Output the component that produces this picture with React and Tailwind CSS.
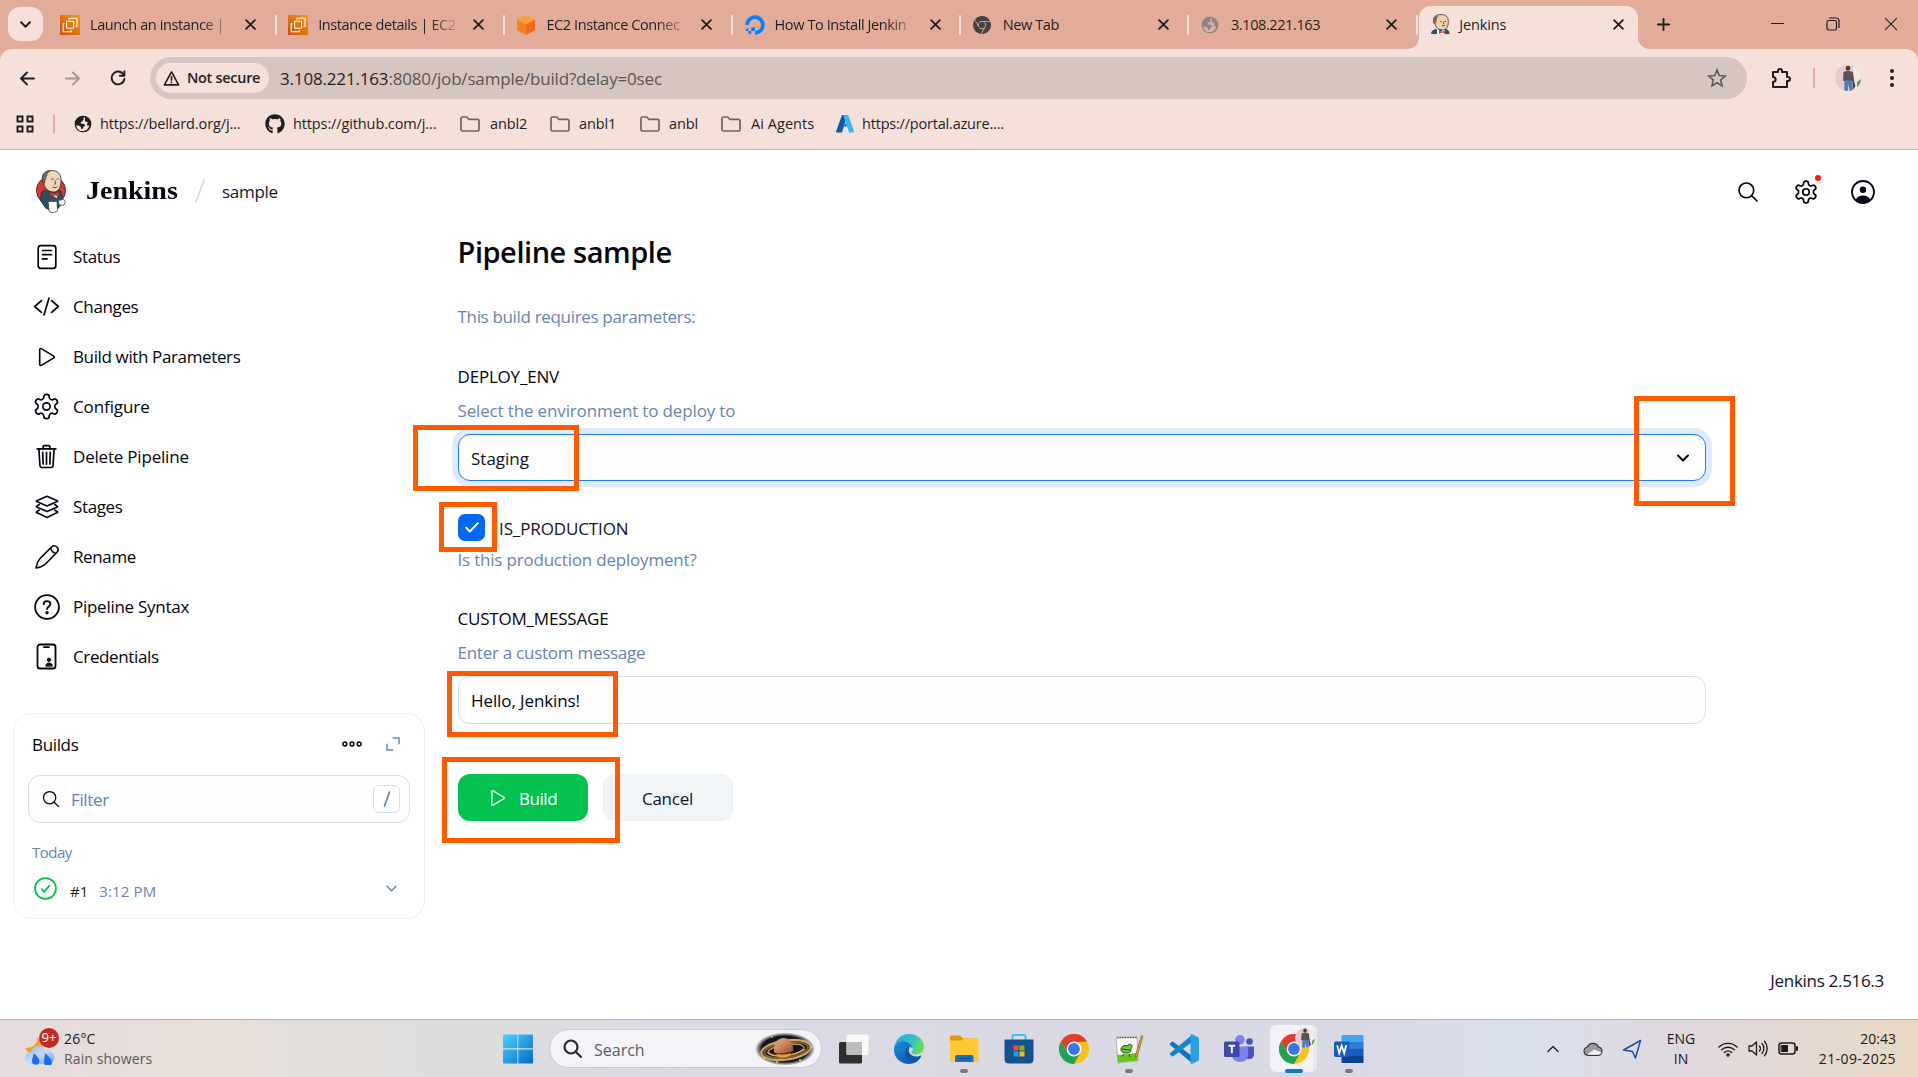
import React from "react";
import { FaGithub, FaDigitalOcean } from "react-icons/fa";
import { SiGooglechrome } from "react-icons/si";
import {
  IoPlayOutline,
  IoTrashOutline,
  IoCodeSlashOutline,
  IoSearchOutline,
} from "react-icons/io5";

/* ---------- shared drawings ---------- */

const GEAR =
  "M12.22 2h-.44a2 2 0 0 0-2 2v.18a2 2 0 0 1-1 1.73l-.43.25a2 2 0 0 1-2 0l-.15-.08a2 2 0 0 0-2.73.73l-.22.38a2 2 0 0 0 .73 2.73l.15.1a2 2 0 0 1 1 1.72v.51a2 2 0 0 1-1 1.74l-.15.09a2 2 0 0 0-.73 2.73l.22.38a2 2 0 0 0 2.73.73l.15-.08a2 2 0 0 1 2 0l.43.25a2 2 0 0 1 1 1.73V20a2 2 0 0 0 2 2h.44a2 2 0 0 0 2-2v-.18a2 2 0 0 1 1-1.73l.43-.25a2 2 0 0 1 2 0l.15.08a2 2 0 0 0 2.73-.73l.22-.39a2 2 0 0 0-.73-2.73l-.15-.08a2 2 0 0 1-1-1.74v-.5a2 2 0 0 1 1-1.74l.15-.09a2 2 0 0 0 .73-2.73l-.22-.38a2 2 0 0 0-2.73-.73l-.15.08a2 2 0 0 1-2 0l-.43-.25a2 2 0 0 1-1-1.73V4a2 2 0 0 0-2-2z";

function Svg({ className, box = "0 0 24 24", sw = 1.6, children }) {
  return (
    <svg
      viewBox={box}
      className={"shrink-0 " + className}
      fill="none"
      stroke="currentColor"
      strokeWidth={sw}
      strokeLinecap="round"
      strokeLinejoin="round"
    >
      {children}
    </svg>
  );
}

const Gear = ({ className, sw = 1.6 }) => (
  <Svg className={className} sw={sw}>
    <path d={GEAR} />
    <circle cx="12" cy="12" r="3" />
  </Svg>
);

const Chevron = ({ className, sw = 2 }) => (
  <Svg className={className} box="0 0 12 8" sw={sw}>
    <path d="M1 1.500l5 5 5-5" />
  </Svg>
);

const Close = ({ className = "size-[11px]", sw = 2 }) => (
  <Svg className={className} box="0 0 12 12" sw={sw}>
    <path d="M1.200 1.200l9.600 9.600M10.800 1.200l-9.600 9.600" />
  </Svg>
);

const Ec2Icon = () => (
  <svg viewBox="0 0 20 20" className="size-5 shrink-0">
    <defs>
      <linearGradient id="ec2" x1="0" y1="1" x2="1" y2="0">
        <stop offset="0" stopColor="#c8511b" />
        <stop offset="1" stopColor="#ff9900" />
      </linearGradient>
    </defs>
    <rect width="20" height="20" fill="url(#ec2)" />
    <g fill="none" stroke="#fff" strokeWidth="1.100">
      <rect x="6.600" y="6.200" width="7" height="7" rx=".6" />
      <path d="M9 4.800V3.300h8v8h-1.600M4.600 8.800H3.200v8h8v-1.600" />
    </g>
  </svg>
);

const CubeIcon = () => (
  <svg viewBox="0 0 20 20" className="size-5 shrink-0">
    <path d="M10 0l9 4.600L10 9.400 1 4.600z" fill="#ffa032" />
    <path d="M1 4.600l9 4.800V20l-9-4.800z" fill="#f58220" />
    <path d="M19 4.600l-9 4.800V20l9-4.800z" fill="#f06a1d" />
  </svg>
);

const GlobeIcon = ({ className, land = "#f5e0da" }) => (
  <svg viewBox="0 0 20 20" className={"shrink-0 " + className}>
    <circle cx="10" cy="10" r="9.300" fill="currentColor" />
    <path
      d="M12.200 2.600c-1.600.2-2 1.200-1.600 2 .4 1-1.200 1-1.200 2.100 0 1-2 .8-2 2.200 0 1.200 3.600.6 4.600 1.800.8 1-.6 1.800-1.400 2.400-.8.8-.4 2.600-1.800 2.600-1.200 0-.8-2.200-1.600-3-.8-1-3-.8-4.400-1.700-.5 3 2 6.600 6 6.800 4.600.2 7.600-2.800 8.200-6.200-1.400.4-2.400.2-2.600-.8-.2-1.200 1.200-1.400.6-2.600-.5-1-1.800-.4-2.600-1.200-.8-1 .4-2.600-.2-4.400z"
      fill={land}
    />
  </svg>
);

/* Portrait bust used as the favicon of the active tab */
const ButlerHead = () => (
  <svg viewBox="0 0 20 20" className="size-5 shrink-0">
    <path d="M1 20c0-3.200 2.500-4.400 5-5l9-.2c3 .6 4.500 2 4.500 5.200z" fill="#2b5468" />
    <path d="M7 14l3.500 4L15 14v6H7z" fill="#fff" />
    <path d="M3.500 7C3 2.500 6.500.5 11 .5c5 0 7.500 2.500 7.300 7.500-.2 5-2.200 8-5.800 8C8 16 5.500 12.500 5 10z" fill="#edcfa9" stroke="#3b3b3b" strokeWidth=".8" />
    <path d="M3.600 10C2.500 6.500 3.300 2.300 8.500 1 6.500 3.500 7 6 6 9.500z" fill="#6f6b68" />
    <path d="M10 7.500h1.500M14.500 7.500H16M12 11.500h3M13.500 8v2" stroke="#333" strokeWidth=".8" fill="none" />
    <path d="M9 16.500l3 1.300 3-1.300v3.300l-3-1.300-3 1.300z" fill="#d33833" />
  </svg>
);

const ButlerLogo = () => (
  <svg viewBox="0 0 30 43" className="h-[43px] w-[30px] shrink-0">
    <ellipse cx="15" cy="20.500" rx="14.600" ry="14.300" fill="#d33833" stroke="#222" strokeWidth=".8" />
    <path d="M4.500 30.500l1-8.500 5-2.500h11l4 2.500 1.500 9-4 6.500c-3 3-10 3-13.500.5z" fill="#2f4f61" stroke="#1c2b33" strokeWidth=".7" />
    <path d="M13.500 22l4.500 2.500 4-2.500-1 6-3.500-2z" fill="#fff" />
    <path d="M6.500 9C6 3 10 .5 15.500.5c6.500 0 9.500 3.500 9.500 9.500 0 7-2 12-7.500 12C12 22 8.500 18 8 14z" fill="#f0d6b7" stroke="#2d2d2d" strokeWidth=".8" />
    <path d="M7.400 13C4.500 7.500 7 1.300 15 .6c-4.600 2-3.800 5.500-5.300 7.700-.5 1.500-.6 3-1.100 4.700z" fill="#6d6a68" stroke="#2d2d2d" strokeWidth=".5" />
    <path d="M15 9.500c.8-.8 2-.8 2.600 0M20.500 9.300c.7-.7 1.600-.6 2.200.1M19 10.500l.8 3.300-1.600.4M16.500 17c1.600 1 3.600.9 5-.5" stroke="#2d2d2d" strokeWidth=".8" fill="none" />
    <path d="M13.500 21.500l5 1.700 5-1.500v4.600l-5-1.200-4.700 1.500z" fill="#d33833" stroke="#5e1512" strokeWidth=".6" />
    <path d="M12 31.500l9-.3.500 9.300c-1 2.200-7 2.700-8.500.5z" fill="#fff" stroke="#333" strokeWidth=".8" />
    <path d="M22.500 30.500l5-1.200 1.800 2.200-1.300 3.800-5-.5z" fill="#f4f4f4" stroke="#444" strokeWidth=".7" />
  </svg>
);

const FolderIcon = () => (
  <Svg className="h-4 w-5 text-[#6b6462]" box="0 0 20 16" sw={1.7}>
    <path d="M1 2.500C1 1.500 1.500 1 2.500 1h4.200l2.100 2.300h8.700c1 0 1.500.5 1.500 1.500v8.700c0 1-.5 1.500-1.500 1.500h-15C1.500 15 1 14.500 1 13.500z" />
  </Svg>
);

const AzureIcon = () => (
  <svg viewBox="0 0 18 18" className="size-[18px] shrink-0">
    <path d="M6 0h5.500L6 17.500H.8c-.6 0-1-.5-.7-1.200z" fill="#0f5cae" />
    <path d="M6.500 11.500h8.500L11.800 7z" fill="#0a7bd6" />
    <path d="M7.300 0h4.300c.5 0 .8.2 1 .7l5.300 15.600c.2.700-.2 1.200-.8 1.200h-5.200c.7 0 1-.5.800-1.200z" fill="#38b6f2" />
  </svg>
);

const Portrait = ({ className }) => (
  <svg viewBox="0 0 26 26" className={"shrink-0 rounded-full " + className}>
    <rect width="26" height="26" fill="#e6cdc9" />
    <rect x="18" width="8" height="26" fill="#f1ebe6" />
    <path d="M22 17l4-3v9h-4z" fill="#4d9f5b" />
    <circle cx="13" cy="3.200" r="2.400" fill="#5b3a2c" />
    <path d="M8.500 7l4.500-1.600L18 7l1 9h-11z" fill="#57535d" />
    <path d="M9.500 15.500h7.500l.6 10.500h-3l-1-7-1 7H9.300z" fill="#4a7cba" />
    <path d="M17 9l3.500 12-2.500 4z" fill="#4a4246" />
  </svg>
);

/* ---------- browser chrome ---------- */

const TABS = [
  { icon: <Ec2Icon />, title: "Launch an instance |", fade: true },
  { icon: <Ec2Icon />, title: "Instance details | EC2", fade: true },
  { icon: <CubeIcon />, title: "EC2 Instance Connec", fade: true },
  { icon: <FaDigitalOcean className="size-5 shrink-0 text-[#0a80ff]" />, title: "How To Install Jenkin", fade: true },
  { icon: <SiGooglechrome className="size-[18px] shrink-0 text-[#45403f]" />, title: "New Tab" },
  { icon: <GlobeIcon className="size-[18px] text-[#8a8482]" land="#d9b0a3" />, title: "3.108.221.163" },
];

function Tab({ icon, title, fade }) {
  return (
    <div className="flex h-[41px] w-[228.200px] shrink-0 items-center pl-[13px]">
      <div className="flex w-[21px] shrink-0 items-center">{icon}</div>
      <div
        className={
          "ml-[9px] w-[142px] whitespace-nowrap text-[14.500px] tracking-[-0.400px] " +
          (fade ? "[mask-image:linear-gradient(to_right,#000_78%,transparent_102%)]" : "")
        }
      >
        {title}
      </div>
      <Close className="ml-[13px] size-[11px]" />
      <div className="-mr-[1.500px] ml-auto h-5 w-0.5 rounded bg-[#f5e0da]" />
    </div>
  );
}

function TabStrip() {
  return (
    <div className="flex h-[49px] items-end bg-[#e3ac9a] text-[#1f1f1f]">
      <div className="ml-2 flex h-[41px] w-[39px] shrink-0 items-start">
        <div className="-mt-px flex h-[34px] w-[35px] items-center justify-center rounded-xl bg-[#f5e0da]">
          <Chevron className="h-[7px] w-[11px]" sw={2.300} />
        </div>
      </div>
      <div className="flex pb-[4px]">
        {TABS.map((t) => (
          <Tab key={t.title} {...t} />
        ))}
      </div>
      <div className="relative ml-[3px] flex h-[43px] w-[219px] shrink-0 items-center rounded-t-xl bg-[#f5e0da] pb-[7px] pl-[11px]">
        <svg viewBox="0 0 12 12" className="absolute bottom-0 -left-3 size-3" fill="#f5e0da">
          <path d="M12 0v12H0C7 12 12 7 12 0z" />
        </svg>
        <svg viewBox="0 0 12 12" className="absolute -right-3 bottom-0 size-3" fill="#f5e0da">
          <path d="M0 0v12h12C5 12 0 7 0 0z" />
        </svg>
        <ButlerHead />
        <div className="ml-[9px] w-[154px] pt-px text-[14.500px] tracking-[-0.100px]">Jenkins</div>
        <Close />
      </div>
      <Svg className="mb-[18px] ml-[19px] size-[13px]" box="0 0 14 14" sw={2}>
        <path d="M7 1v12M1 7h12" />
      </Svg>
      <div className="mb-[18px] ml-auto flex items-center pr-5">
        <div className="mr-[42px] mb-[2px] h-px w-[13px] bg-[#1f1f1f]" />
        <Svg className="mr-[44px] size-[14px]" box="0 0 14 14" sw={1.200}>
          <rect x="1" y="3.500" width="9.500" height="9.500" rx="1.800" />
          <path d="M3.500 1h6.500a3 3 0 0 1 3 3v6.500" />
        </Svg>
        <Close className="size-[14px]" sw={0.900} />
      </div>
    </div>
  );
}

function Toolbar() {
  return (
    <div className="flex h-[58px] items-center bg-[#e3ac9a]">
      <div className="flex h-[58px] w-full items-center rounded-t-xl bg-[#f5e0da] text-[#1f1f1f]">
        <Svg className="ml-5 size-[15px]" box="0 0 15 15" sw={1.900}>
          <path d="M14 7.500H1.500M7 1.500l-6 6 6 6" />
        </Svg>
        <Svg className="ml-[30px] size-[15px] text-[#a69792]" box="0 0 15 15" sw={1.900}>
          <path d="M1 7.500h12.500M8 1.500l6 6-6 6" />
        </Svg>
        <Svg className="ml-[30px] size-4" box="0 0 16 16" sw={1.900}>
          <path d="M14 5.500A6.400 6.400 0 1 0 14.400 9" />
          <path d="M14.400 1.300v4.500H9.900" />
        </Svg>
        <div className="ml-[24px] flex h-[42px] w-[1597px] items-center rounded-full bg-[#d7c6bf]">
          <div className="ml-[6px] flex h-[30px] w-[113px] items-center rounded-full bg-[#f5e0da] pl-[7px]">
            <Svg className="size-[17px]" box="0 0 18 18" sw={1.700}>
              <path d="M9 2L1.500 15.800h15z" />
              <path d="M9 7.200v3.600M9 13v.4" />
            </Svg>
            <span className="ml-[7px] text-[14.500px] font-semibold tracking-[-0.300px] whitespace-nowrap">Not secure</span>
          </div>
          <div className="mt-px ml-[11px] text-[17px] tracking-[-0.170px] text-[#5d5552]">
            <span className="text-[#1f1f1f]">3.108.221.163</span>:8080/job/sample/build?delay=0sec
          </div>
          <Svg className="mr-[20px] ml-auto size-[20px] text-[#5d5a59]" box="0 0 20 20" sw={1.600}>
            <path strokeLinejoin="miter" d="M10 2l2.300 5.600 6 .5-4.600 3.900 1.400 5.900L10 14.800l-5.100 3.100L6.300 12 1.700 8.100l6-.5z" />
          </Svg>
        </div>
        <Svg className="ml-[23px] size-[22px]" box="0 0 22 22" sw={2}>
          <path d="M3 5h5V4a2 2 0 0 1 4 0v1h5v5h1a2 2 0 0 1 0 4h-1v6H3v-5c3.500-.3 3.500-4.700 0-5z" />
        </Svg>
        <div className="ml-[21px] h-5 w-0.5 rounded bg-[#e3ac9a]" />
        <Portrait className="ml-[20px] size-[26px]" />
        <div className="ml-[29px] flex flex-col gap-[3px]">
          <i className="size-1 rounded-full bg-[#1f1f1f]" />
          <i className="size-1 rounded-full bg-[#1f1f1f]" />
          <i className="size-1 rounded-full bg-[#1f1f1f]" />
        </div>
      </div>
    </div>
  );
}

function Bookmark({ icon, className, gap = "ml-[9px]", children }) {
  return (
    <div className={"flex shrink-0 items-center whitespace-nowrap " + className}>
      {icon}
      <span className={gap}>{children}</span>
    </div>
  );
}

function BookmarkBar() {
  return (
    <div className="flex h-[43px] items-center border-b border-[#c2b2ac] bg-[#f5e0da] pb-[8px] text-[14.500px] tracking-[-0.120px] text-[#1f1f1f]">
      <Svg className="ml-4 size-[18px]" box="0 0 18 18" sw={1.900}>
        <path strokeLinejoin="miter" d="M1.500 1.500h5v5h-5zM11.500 1.500h5v5h-5zM1.500 11.500h5v5h-5zM11.500 11.500h5v5h-5z" />
      </Svg>
      <div className="ml-[19px] h-5 w-0.5 rounded bg-[#e3ac9a]" />
      <Bookmark className="ml-[19px] w-[191px]" gap="ml-[8px]" icon={<GlobeIcon className="size-[18px]" />}>https://bellard.org/j...</Bookmark>
      <Bookmark className="w-[195px]" gap="ml-[8px]" icon={<FaGithub className="size-5" />}>https://github.com/j...</Bookmark>
      <Bookmark className="w-[90px]" gap="ml-[10px]" icon={<FolderIcon />}>anbl2</Bookmark>
      <Bookmark className="w-[90px]" icon={<FolderIcon />}>anbl1</Bookmark>
      <Bookmark className="w-[81px]" icon={<FolderIcon />}>anbl</Bookmark>
      <Bookmark className="w-[115px]" gap="ml-[10px] tracking-[0.050px]" icon={<FolderIcon />}>Ai Agents</Bookmark>
      <Bookmark gap="ml-[8px] tracking-[-0.200px]" icon={<AzureIcon />}>https://portal.azure....</Bookmark>
    </div>
  );
}

/* ---------- Jenkins page ---------- */

const MENU = [
  {
    label: "Status",
    icon: (
      <Svg className="size-[26px]" box="0 0 26 26" sw={1.700}>
        <rect x="4.200" y="1.700" width="17.600" height="22.600" rx="2.600" />
        <path d="M8.500 6.500h9M8.500 10.700h9M8.500 14.900h4.500" />
      </Svg>
    ),
  },
  { label: "Changes", icon: <IoCodeSlashOutline className="size-[27px] shrink-0" /> },
  { label: "Build with Parameters", icon: <IoPlayOutline className="size-[26px] shrink-0" /> },
  { label: "Configure", icon: <Gear className="size-[29px]" sw={1.400} />, tracking: "tracking-[-0.100px]" },
  { label: "Delete Pipeline", icon: <IoTrashOutline className="size-[27px] shrink-0" />, tracking: "tracking-[-0.200px]" },
  {
    label: "Stages",
    icon: (
      <Svg className="size-[26px]" box="0 0 26 26" sw={1.600}>
        <path d="M13 2.200l10.300 4.600a.4.400 0 0 1 0 .8L13 12 2.700 7.600a.4.400 0 0 1 0-.8z" />
        <path d="M5.300 10.500l-2.600 1.700a.4.400 0 0 0 0 .8L13 17.600 23.300 13a.4.400 0 0 0 0-.8l-2.600-1.700" />
        <path d="M5.300 16l-2.600 1.800a.4.400 0 0 0 0 .8L13 23.400l10.300-4.800a.4.400 0 0 0 0-.8L20.700 16" />
      </Svg>
    ),
  },
  {
    label: "Rename",
    icon: (
      <Svg className="size-[26px]" box="0 0 26 26" sw={1.600}>
        <path d="M2 24c.5-3.500 1.800-7 4-9.500L17.700 2.900c1.500-1.400 3.700-1.300 5.200.1 1.500 1.500 1.500 3.700.1 5.200L11.500 20C9 22.300 5.500 23.600 2 24z" />
        <path d="M16.800 4.200c.4 2.800 2 4.500 4.900 5" />
      </Svg>
    ),
  },
  {
    label: "Pipeline Syntax",
    tracking: "tracking-[-0.270px]",
    icon: (
      <Svg className="size-[26px]" box="0 0 26 26" sw={1.800}>
        <circle cx="13" cy="13" r="11.900" />
        <path d="M9.700 10.200c.1-2 1.500-3 3.300-3 1.900 0 3.400 1.100 3.400 2.800 0 2.400-3.200 2.500-3.300 5" />
        <circle cx="13" cy="18.700" r=".8" fill="currentColor" />
      </Svg>
    ),
  },
  {
    label: "Credentials",
    icon: (
      <Svg className="size-[27px]" box="0 0 27 27" sw={1.800}>
        <rect x="4.500" y="1.500" width="18" height="24" rx="2.600" />
        <path d="M11 4.200h5" />
        <circle cx="16" cy="16.800" r="1.700" fill="currentColor" strokeWidth="1" />
        <path d="M12.800 22.800c.1-2 1.500-2.700 3.200-2.700s3.200.7 3.300 2.700z" fill="currentColor" strokeWidth="1" />
      </Svg>
    ),
  },
];

function PageHeader() {
  return (
    <header className="flex h-[82px] items-center pt-px pl-9">
      <ButlerLogo />
      <div className="ml-5 w-[91px]">
        <span className="inline-block origin-left scale-x-[1.120] font-['Liberation_Serif',serif] text-[25px] leading-none font-bold">
          Jenkins
        </span>
      </div>
      <svg viewBox="0 0 10 24" className="-mt-px ml-[18px] h-6 w-2.5" stroke="#cfd8e6" strokeWidth="1.600" strokeLinecap="round">
        <path d="M1 23L9 1" />
      </svg>
      <span className="ml-[17px] text-[17px] tracking-[-0.300px] text-[#14141f]">sample</span>
      <div className="ml-auto flex items-center pr-[43px]">
        <IoSearchOutline className="size-6 [&_path]:[stroke-width:36px]" />
        <div className="relative ml-[33px] size-[26px]">
          <Gear className="size-[26px]" sw={1.600} />
          <i className="absolute top-0 right-[-2px] size-1.5 -translate-y-1 rounded-full bg-[#fe1414]" />
        </div>
        <svg viewBox="0 0 24 24" className="ml-[32px] size-6" fill="none" stroke="currentColor" strokeWidth="1.800">
          <circle cx="12" cy="12" r="11" />
          <circle cx="12" cy="9.700" r="3.200" fill="currentColor" stroke="none" />
          <path d="M4.800 19.500c1.500-3 4-4 7.200-4s5.700 1 7.200 4c-3.800 4.300-10.600 4.300-14.400 0z" fill="currentColor" stroke="none" />
        </svg>
      </div>
    </header>
  );
}

function BuildsCard() {
  return (
    <div className="mt-[31px] ml-[13px] h-[206px] w-[412px] rounded-[18px] border border-[#eceef4] px-[14px]">
      <div className="mt-[19px] flex h-6 items-center pl-1">
        <span className="text-[17px] tracking-[-0.350px]">Builds</span>
        <Svg className="mr-[24px] mb-[2px] ml-auto h-[6px] w-5" box="0 0 20 6" sw={1.500}>
          <circle cx="2.900" cy="3" r="1.900" />
          <circle cx="10" cy="3" r="1.900" />
          <circle cx="17.100" cy="3" r="1.900" />
        </Svg>
        <Svg className="mr-[10px] mb-[2px] size-[14px] text-[#8aa3c4]" box="0 0 14 14" sw={1.900}>
          <path d="M7.500 1H13v5.500M1 7.500V13h5.500" />
        </Svg>
      </div>
      <div className="mt-[18px] flex h-12 w-[382px] items-center rounded-xl border border-[#d9deea] bg-[#fdfdfe] pr-[9px] pl-[12px]">
        <IoSearchOutline className="size-[20px] shrink-0" />
        <span className="mt-px ml-[10px] text-[17px] tracking-[-0.350px] text-[#6885b2]">Filter</span>
        <div className="ml-auto flex h-[28px] w-[27px] items-center justify-center rounded-md border border-[#d9deea] bg-white">
          <svg viewBox="0 0 8 16" className="h-4 w-2" stroke="#6885b2" strokeWidth="1.700" strokeLinecap="round">
            <path d="M1.500 15L6.500 1" />
          </svg>
        </div>
      </div>
      <div className="mt-[17px] h-6 pl-1 text-[15px] leading-6 tracking-[-0.500px] text-[#6885b2]">Today</div>
      <div className="mt-[12px] flex h-6 items-center pl-[6px] text-[15px]">
        <Svg className="size-[23px] text-[#0cc24f]" box="0 0 24 24" sw={1.900}>
          <circle cx="12" cy="12" r="10.900" />
          <path d="M8 12.800l2.500 2.800L16.200 9" />
        </Svg>
        <span className="mt-[6px] ml-[13px] text-[#22222e]">#1</span>
        <span className="mt-[6px] ml-[11px] tracking-[0.150px] text-[#6885b2]">3:12 PM</span>
        <Chevron className="mr-[13px] ml-auto h-[7px] w-[11px] text-[#6885b2]" sw={1.700} />
      </div>
    </div>
  );
}

function Sidebar() {
  return (
    <aside className="w-[458px] shrink-0">
      <nav>
        {MENU.map((m) => (
          <div key={m.label} className="flex h-[50px] items-center">
            <div className="flex w-[73px] justify-center pb-px pl-5">{m.icon}</div>
            <span className={"text-[17px] " + (m.tracking || "tracking-[-0.370px]")}>{m.label}</span>
          </div>
        ))}
      </nav>
      <BuildsCard />
    </aside>
  );
}

/* Orange annotation frame laid over a control */
const Frame = ({ className }) => (
  <div className={"pointer-events-none absolute z-10 border-[5px] border-[#ff5a00] " + className} />
);

function BuildForm() {
  return (
    <main className="w-[1248px] text-[17px] leading-6 tracking-[-0.200px] [&>p]:-ml-[0.500px]">
      <h1 className="-ml-[0.500px] text-[29px] leading-[40px] font-semibold tracking-[-0.450px]">Pipeline sample</h1>
      <p className="mt-[33px] tracking-[-0.330px] text-[#6885b2]">This build requires parameters:</p>

      <div className="mt-[36px] -ml-[0.500px]">DEPLOY_ENV</div>
      <p className="mt-2.5 tracking-[-0.150px] text-[#6885b2]">Select the environment to deploy to</p>
      <div className="relative mt-[11px] flex h-[47px] items-center rounded-xl border border-[#1f7cf0] bg-[#fdfdfe] pr-[16px] pl-3 shadow-[0_0_0_6px_#deebfc]">
        <span className="mt-[2px] tracking-normal text-[#14141f]">Staging</span>
        <Chevron className="ml-auto h-[8px] w-[12px]" sw={1.900} />
        <Frame className="-top-[10px] -left-[46px] h-[66px] w-[166px]" />
        <Frame className="-top-[39px] -right-[30px] h-[110px] w-[101px]" />
      </div>

      <div className="relative mt-[33px] flex h-[27px] items-center">
        <div className="flex size-[27px] items-center justify-center rounded-[7px] bg-[#0068f8]">
          <Svg className="h-[11px] w-[14px] text-white" box="0 0 14 11" sw={2}>
            <path d="M1.200 5.800l3.600 3.700 8-8.200" />
          </Svg>
        </div>
        <span className="mt-[2px] ml-[14px] tracking-[-0.120px] text-[#14141f]">IS_PRODUCTION</span>
        <Frame className="-top-[12px] -left-[19px] h-[50px] w-[58px]" />
      </div>
      <p className="mt-[7px] text-[#6885b2]">Is this production deployment?</p>

      <div className="mt-[35px] -ml-[0.500px]">CUSTOM_MESSAGE</div>
      <p className="mt-2.5 tracking-[-0.260px] text-[#6885b2]">Enter a custom message</p>
      <div className="relative mt-[11px] flex h-12 items-center rounded-xl border border-[#d9deea] bg-[#fdfdfe] pl-3">
        <span className="mt-[2px] tracking-[-0.100px]">Hello, Jenkins!</span>
        <Frame className="-top-[6px] -left-[12px] h-[66px] w-[171px]" />
      </div>

      <div className="relative mt-[50px] flex h-[47px] gap-[15px]">
        <div className="flex w-[130px] items-center rounded-xl bg-[#04c24e] pl-[29px] text-white">
          <IoPlayOutline className="size-[22px] shrink-0" />
          <span className="mt-[2px] ml-[10px] font-medium tracking-[-0.450px]">Build</span>
        </div>
        <div className="flex w-[130px] items-center justify-center rounded-xl border border-[#edf0f4] bg-[#f2f5f8] pt-[2px] pr-px tracking-[-0.250px] text-[#14141f]">
          Cancel
        </div>
        <Frame className="-top-[17px] -left-[16px] h-[86px] w-[178px]" />
      </div>
    </main>
  );
}

/* ---------- taskbar ---------- */

const ChromeColor = ({ className }) => (
  <svg viewBox="0 0 30 30" className={"shrink-0 " + className}>
    <circle cx="15" cy="15" r="15" fill="#fbc116" />
    <path d="M2 7.500A15 15 0 0 1 28 7.500L15 8 9 18.500z" fill="#e33b2e" />
    <path d="M2 7.500A15 15 0 0 0 15 30l6.300-11.300L9 18.800z" fill="#1fa354" />
    <circle cx="15" cy="15" r="7.400" fill="#fff" />
    <circle cx="15" cy="15" r="5.900" fill="#3578e5" />
  </svg>
);

const WindowsLogo = () => (
  <svg viewBox="0 0 30 30" className="size-[30px]">
    <defs>
      <linearGradient id="win" gradientUnits="userSpaceOnUse" x1="0" y1="0" x2="30" y2="30">
        <stop offset="0" stopColor="#4fd4fd" />
        <stop offset="1" stopColor="#0468c8" />
      </linearGradient>
    </defs>
    <path fill="url(#win)" d="M1 .5h13.400v13.800H0V1.500q0-1 1-1zM15.300.5H29q1 0 1 1v12.800H15.300zM0 15.400h14.400v14H1q-1 0-1-1zM15.300 15.400H30v13q0 1-1 1H15.300z" />
  </svg>
);

const Saturn = () => (
  <svg viewBox="0 0 60 32" className="h-8 w-[60px]">
    <defs>
      <radialGradient id="space">
        <stop offset=".78" stopColor="#14131f" />
        <stop offset="1" stopColor="#14131f" stopOpacity="0" />
      </radialGradient>
      <linearGradient id="planet" x1="0" x2="1" y1="0" y2="1">
        <stop offset="0" stopColor="#e3b08c" />
        <stop offset=".5" stopColor="#c98258" />
        <stop offset="1" stopColor="#8a4d28" />
      </linearGradient>
    </defs>
    <ellipse cx="30" cy="16" rx="30" ry="16.500" fill="url(#space)" />
    <g transform="rotate(-8 31 16)" fill="none">
      <ellipse cx="31" cy="17" rx="25" ry="9.500" stroke="#d0a562" strokeWidth="2.200" />
      <ellipse cx="31" cy="17" rx="22" ry="7.500" stroke="#7d633a" strokeWidth="2" />
      <ellipse cx="31" cy="17" rx="18" ry="5.500" stroke="#c9a163" strokeWidth="1.300" />
    </g>
    <path d="M19 15a9.500 9.500 0 0 1 19-1l.3 4c-5 2.500-14 3.500-19.300 1.500z" fill="url(#planet)" />
    <path d="M21 20.500c5 1.500 11 1 15-.8l-2 3.500q-6 2.500-11 .3z" fill="#f09a3a" />
    <path d="M12 19c7 6 26 5 38-3" stroke="#d3a55a" strokeWidth="1.500" fill="none" />
    <g fill="#f6d98e">
      <circle cx="17" cy="4" r=".8" /><circle cx="9" cy="25" r=".8" /><circle cx="22" cy="29" r=".9" />
      <circle cx="45" cy="27" r="1" /><circle cx="56" cy="14" r=".8" />
    </g>
  </svg>
);

const TaskView = () => (
  <svg viewBox="0 0 30 30" className="size-[30px]">
    <rect x="0" y="8" width="23" height="21.500" rx="1.500" fill="#2f2f2f" />
    <rect x="7.500" y=".5" width="22" height="20.500" rx="1.500" fill="#fafafa" />
    <path d="M7.500 8H23v13H9q-1.500 0-1.500-1.500z" fill="#bdbdbd" />
  </svg>
);

const Edge = () => (
  <svg viewBox="0 0 30 30" className="size-[30px]">
    <defs>
      <linearGradient id="edgeTop" x1="0" x2="1" y1=".3" y2=".6">
        <stop offset="0" stopColor="#2aa7e0" />
        <stop offset=".6" stopColor="#35c1c0" />
        <stop offset="1" stopColor="#6fe34b" />
      </linearGradient>
      <linearGradient id="edgeLow" x1="0" x2="1" y1="0" y2="1">
        <stop offset="0" stopColor="#1590dd" />
        <stop offset="1" stopColor="#0a4a9c" />
      </linearGradient>
    </defs>
    <path d="M0 14.500C1 6 7 0 15 0c9 0 15 6 15 12.500 0 5-3.500 8-8 8-3.500 0-5-1.300-4.500-2.300 1.500-1.500 1.500-3 1-4.200C17 10.500 13 8 9 8c-4.500 0-8 2.500-9 6.500z" fill="url(#edgeTop)" />
    <path d="M0 15C.5 10 4.500 7.500 9 7.500c5 0 9.500 3.500 9.500 7-2-3-7-2-7.500 2.500-.5 5.500 5 9 10 8 3-.6 5-1.800 6-2.500C25 27 20.500 30 15 30 6.500 30-.5 23.500 0 15z" fill="url(#edgeLow)" />
    <path d="M11 17c.2-3.500 3-5.200 5.500-4.700C15 14 14 16 15.500 19c1.200 2.300 4.500 4 8.500 3.500 1-.2 2-.6 2.500-.9.600-.3 1 .3.600.8C25 25 22.500 27.500 18 27.500c-5 0-7.500-5-7-10.500z" fill="#0c59a8" />
  </svg>
);

const Explorer = () => (
  <svg viewBox="0 0 30 30" className="size-[30px]">
    <path d="M1 2.500Q1 1.500 2 1.500h9l3 3h14v6H1z" fill="#d99a06" />
    <path d="M1 6.500h11.500l2-2H28q1.500 0 1.500 1.500v22H1z" fill="#fdc834" />
    <path d="M6 28v-5q0-2 2-2h14.500q2 0 2 2v5z" fill="#1173c5" />
    <path d="M9.500 24.500h12" stroke="#0a4f94" strokeWidth="1.300" />
  </svg>
);

const Store = () => (
  <svg viewBox="0 0 30 30" className="size-[30px]">
    <path d="M8.500 6V2.500q0-1.500 1.500-1.500h10q1.500 0 1.500 1.500V6" fill="none" stroke="#36c3f6" strokeWidth="2" />
    <path d="M.5 5.500h29V25q0 4.500-4.500 4.500H5Q.5 29.500.5 25z" fill="#16508e" />
    <path fill="#f05328" d="M9.500 11.500h5v5h-5z" /><path fill="#80bb0a" d="M15.500 11.500h5v5h-5z" />
    <path fill="#09a7f0" d="M9.500 17.500h5v5h-5z" /><path fill="#fdba09" d="M15.500 17.500h5v5h-5z" />
  </svg>
);

const NotepadPP = () => (
  <svg viewBox="0 0 30 30" className="size-[30px]">
    <path d="M2 4l21-1 1 24-20 2z" fill="#f8f8f6" stroke="#9b9b96" strokeWidth=".7" />
    <path d="M3 3.500h20" stroke="#555" strokeWidth="1.300" strokeDasharray="1.300 1.300" />
    <path d="M3 21l20.500-2 .4 7.500L4 28.500z" fill="#67c61b" />
    <path d="M7 15.500c0-3 3-4.500 6.500-3.800 1-2 4.500-2 4.500.7 0 1.600-1.600 2.400-1.200 4 .4 1.600-3.200 3.200-6.400 2.400C8 18.300 7 17.100 7 15.500z" fill="#6cc93a" stroke="#274a12" strokeWidth="1" />
    <path d="M8 15l8 1M10 20l-2 2.500M15 20l1 3" stroke="#274a12" strokeWidth="1" />
    <path d="M27.500 1.500l1.500.8-5.500 19-2 2 .2-3z" fill="#e7a63a" stroke="#8a5a1c" strokeWidth=".7" />
  </svg>
);

const VsCode = () => (
  <svg viewBox="0 0 30 30" className="size-[30px]">
    <path d="M1 9.500l2-1.800q.6-.5 1.300 0L23 22v7L1.200 11q-.8-.8-.2-1.500z" fill="#1173b8" />
    <path d="M1 20.500l2 1.800q.6.500 1.300 0L23 8V1L1.200 19q-.8.800-.2 1.500z" fill="#1486cd" />
    <path d="M22.500 0l6.300 3q1.200.6 1.200 2v20q0 1.400-1.200 2l-6.300 3q-1 0-1-2V2q0-2 1-2z" fill="#27a0ea" />
  </svg>
);

const Teams = () => (
  <svg viewBox="0 0 30 30" className="size-[30px]">
    <circle cx="25.500" cy="7.500" r="3.300" fill="#4a51bd" />
    <path d="M21 12.500h9v7.500q0 5-5 5h-4z" fill="#4a51bd" />
    <circle cx="16" cy="5.800" r="4.800" fill="#7b83eb" />
    <path d="M8 12.500h16V20q0 8-8 8t-8-8z" fill="#7b83eb" />
    <rect x="0" y="7.500" width="15.500" height="15.500" rx="1.500" fill="#3f47ab" />
    <path d="M4.500 11.800h6.600M7.800 11.800v7.500" stroke="#fff" strokeWidth="1.900" />
  </svg>
);

const Word = () => (
  <svg viewBox="0 0 30 30" className="size-[30px]">
    <path d="M8.500 1h20q1 0 1 1v6h-22V2q0-1 1-1z" fill="#41a5ee" />
    <path d="M7.500 8h22v7h-22z" fill="#2b7cd3" />
    <path d="M7.500 15h22v7h-22z" fill="#185abd" />
    <path d="M7.500 22h22v6q0 1-1 1h-20q-1 0-1-1z" fill="#103f91" />
    <rect x="0" y="7.500" width="15.500" height="15.500" rx="1.500" fill="#1a5dbe" />
    <path d="M3.200 11.300l2 8 2.500-7.600 2.500 7.600 2-8" fill="none" stroke="#fff" strokeWidth="1.700" />
  </svg>
);

function TaskItem({ running, active, children }) {
  return (
    <div className="relative flex h-[57px] w-[55px] shrink-0 items-center justify-center">
      {active && <div className="absolute inset-y-[5px] left-1 w-[47px] rounded-md border-r-[4px] border-[#e8e7ef] bg-[#f3f2f8]" />}
      <div className="relative">{children}</div>
      {running && <div className="absolute bottom-[4px] h-1 w-2 rounded-full bg-[#7c7b82]" />}
      {active && <div className="absolute bottom-[4px] h-1 w-[18px] rounded-full bg-[#0a78d4]" />}
    </div>
  );
}

function Taskbar() {
  return (
    <footer className="flex h-[58px] items-center border-t border-[#b3b1b4] bg-[linear-gradient(90deg,#e4dbdd_0%,#e8dfd9_11%,#dddddd_23%,#dcdae6_36%,#dad9e3_55%,#d9d9e4_70%,#d9dfee_79%,#e0d8de_88%,#e9d9c4_100%)] text-[14px] text-[#1b1b1b]">
      <div className="flex w-[490px] shrink-0 items-center pl-[25px]">
        <div className="relative">
          <svg viewBox="0 0 30 28" className="mt-[4px] h-7 w-[30px]">
            <defs>
              <linearGradient id="cloud" x1="0" x2="1" y1="0" y2="1">
                <stop offset="0" stopColor="#8fb8ef" />
                <stop offset=".5" stopColor="#c3dbf8" />
                <stop offset="1" stopColor="#6f9de6" />
              </linearGradient>
            </defs>
            <path d="M12 0c1 7-4 11-12 11 2 4 5 6 9 6 7 0 10-5 9-10z" fill="#f6a21d" />
            <path d="M6 27a6 6 0 0 1 0-12 8 8 0 0 1 15-1.500A6.500 6.500 0 0 1 24 27z" fill="url(#cloud)" />
            <path d="M9 16c3 3 5.500 6 5.500 8.500a3.800 3.800 0 0 1-7.500 0C7 22 8 19 9 16zM20 16c3 3 7 6 7 9a4 4 0 0 1-8 0c0-3 1-6 1-9z" fill="#1a6ff0" />
          </svg>
          <span className="absolute -top-[5px] left-[14px] flex size-5 items-center justify-center rounded-full bg-[#c42b1c] text-[13px] leading-none text-white">
            9+
          </span>
        </div>
        <div className="ml-[9px] leading-5">
          <div className="tracking-[0.200px]">26°C</div>
          <div className="tracking-[0.120px] text-[#5d5a5a]">Rain showers</div>
        </div>
      </div>
      <div className="mt-px flex w-[55px] shrink-0 justify-center"><WindowsLogo /></div>
      <div className="ml-1 flex h-[39px] w-[273px] shrink-0 items-center rounded-full border border-[#c9c7d0] bg-[#f4f4f8] pr-[6px] pl-[13px]">
        <Svg className="size-[19px] text-[#2a2a2e]" box="0 0 19 19" sw={2.200}>
          <circle cx="8" cy="8" r="6.500" />
          <path d="M13 13l5 5" />
        </Svg>
        <span className="mt-[2px] ml-3 text-[16px] text-[#5c5c61]">Search</span>
        <div className="ml-auto"><Saturn /></div>
      </div>
      <div className="ml-[4px] flex">
        <TaskItem><TaskView /></TaskItem>
        <TaskItem><Edge /></TaskItem>
        <TaskItem running><Explorer /></TaskItem>
        <TaskItem><Store /></TaskItem>
        <TaskItem><ChromeColor className="size-[30px]" /></TaskItem>
        <TaskItem running><NotepadPP /></TaskItem>
        <TaskItem><VsCode /></TaskItem>
        <TaskItem><Teams /></TaskItem>
        <TaskItem active>
          <ChromeColor className="size-[30px]" />
          <Portrait className="absolute -top-[6px] left-4 size-5" />
        </TaskItem>
        <TaskItem running><Word /></TaskItem>
      </div>
      <div className="ml-auto flex items-center pr-[22px]">
        <div className="flex w-10 justify-center">
          <Chevron className="h-[8px] w-[14px] rotate-180" sw={1.300} />
        </div>
        <div className="flex w-10 justify-center">
          <svg viewBox="0 0 20 14" className="h-3.5 w-5">
            <path d="M5 13.300a4.200 4.200 0 0 1-.6-8.300A6 6 0 0 1 15.500 5a4.200 4.200 0 0 1-.3 8.300z" fill="#9b9b9d" stroke="#333" strokeWidth="1.200" />
            <path d="M4 12.700l7-5.200 7.500 3q-1 2.200-3.300 2.200z" fill="#f1f1f2" />
          </svg>
        </div>
        <div className="flex w-10 justify-center pr-[2px]">
          <Svg className="size-5 text-[#1451a6]" box="0 0 20 20" sw={1.500}>
            <path d="M18.500 1.500L1.500 11l9 1.500 3 6.500z" />
          </Svg>
        </div>
        <div className="w-14 text-center leading-5">
          <div>ENG</div>
          <div>IN</div>
        </div>
        <div className="ml-1 flex w-[30px] justify-center">
          <Svg className="h-4 w-5" box="0 0 20 16" sw={1.400}>
            <path d="M1 6a13 13 0 0 1 18 0M3.700 8.800a9.200 9.200 0 0 1 12.600 0M6.400 11.500a5.200 5.200 0 0 1 7.200 0" />
            <circle cx="10" cy="14" r="1.100" fill="currentColor" />
          </Svg>
        </div>
        <div className="flex w-[30px] justify-center">
          <Svg className="h-[17px] w-5" box="0 0 20 17" sw={1.300}>
            <path d="M1 6h3l4.500-4v13L4 11H1zM11.500 6a4 4 0 0 1 0 5M14 3.500a7.500 7.500 0 0 1 0 10M16.500 1.300a11 11 0 0 1 0 14.400" />
          </Svg>
        </div>
        <div className="flex w-[30px] justify-center">
          <Svg className="h-[13px] w-5" box="0 0 20 13" sw={1.500}>
            <rect x="1" y="1" width="16" height="11" rx="2.500" />
            <rect x="3.500" y="3.500" width="6" height="6" fill="currentColor" strokeWidth="1" />
            <path d="M19 5v3" strokeWidth="2" />
          </Svg>
        </div>
        <div className="w-[93px] text-right leading-5">
          <div>20:43</div>
          <div className="tracking-[0.420px]">21-09-2025</div>
        </div>
      </div>
    </footer>
  );
}

export default function App() {
  return (
    <div className="flex h-[1077px] w-[1918px] flex-col overflow-hidden bg-white font-['Open_Sans','Noto_Sans',sans-serif] text-[#05050f]">
      <TabStrip />
      <Toolbar />
      <BookmarkBar />
      <div className="flex min-h-0 flex-1 flex-col">
        <PageHeader />
        <div className="flex flex-1">
          <Sidebar />
          <BuildForm />
        </div>
        <div className="pr-[34px] pb-[26px] text-right text-[17px] leading-6 tracking-[-0.300px] text-[#14141f]">
          Jenkins 2.516.3
        </div>
      </div>
      <Taskbar />
    </div>
  );
}
